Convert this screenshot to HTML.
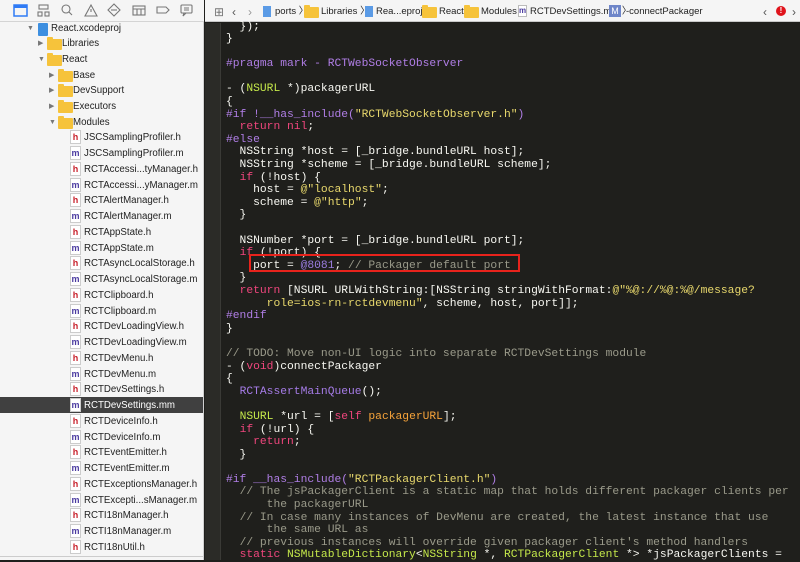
<!DOCTYPE html>
<html><head><meta charset="utf-8"><style>
*{margin:0;padding:0;box-sizing:border-box}
body{width:800px;height:560px;overflow:hidden;background:#1f1f1c;font-family:"Liberation Sans",sans-serif;position:relative}
#side{position:absolute;left:0;top:0;width:204px;height:560px;background:#f5f5f5;border-right:1px solid #d0d0d0}
#stb{position:absolute;left:0;top:0;width:204px;height:22px;border-bottom:1px solid #d4d4d4;background:#f5f5f5}
.row{position:absolute;left:0;width:203px;height:16px;font-size:9.7px;color:#222;line-height:18px;white-space:nowrap}
.row.sel{background:#404040;color:#fff}
.tri{position:absolute;font-size:7px;color:#777}
.fold{position:absolute;top:4px;width:15px;height:11px;background:#f6c33b;border-radius:1px}
.fold:before{content:"";position:absolute;left:0;top:-2px;width:6px;height:3px;background:#f6c33b;border-radius:1px 1px 0 0}
.fi{position:absolute;left:70px;top:1px;width:11px;height:14px;background:#fff;border:1px solid #ccc;font-size:9px;font-weight:bold;line-height:12px;text-align:center}
.h{color:#c8202b}.m{color:#4a3aa0}
.lbl{position:absolute}
#hdr{position:absolute;left:205px;top:0;width:595px;height:22px;background:#f5f5f5;border-bottom:1px solid #c8c8c8;font-size:9.5px;color:#222;line-height:24px;white-space:nowrap}
#gut{position:absolute;left:205px;top:23px;width:16px;height:537px;background:#2b2b27;border-right:1px solid #3a3a36}
#code{position:absolute;left:226px;top:20.5px;font-family:"Liberation Mono",monospace;font-size:11.3px;line-height:12.6px;color:#f8f8f2;white-space:pre}
.pp{color:#b07ee6}.kw{color:#f0467d}.st{color:#e8d86c}.ty{color:#c4e74a}.cm{color:#9a9a8a}.nu{color:#9b7de0}.fn{color:#a67ce8}.or{color:#f6a33a}
#box{position:absolute;left:249px;top:254px;width:271px;height:18px;border:2px solid #e8231c}
</style></head><body>
<div id="side">
<div id="stb">
<svg width="204" height="22" viewBox="0 0 204 22">
<rect x="14" y="5" width="13" height="11" fill="none" stroke="#2f7bf5" stroke-width="1.5"/><rect x="14" y="5" width="13" height="3" fill="#2f7bf5"/>
<g fill="none" stroke="#777" stroke-width="1.1">
<rect x="39" y="5" width="9" height="4"/><rect x="38" y="12" width="4" height="4"/><rect x="45" y="12" width="4" height="4"/>
<circle cx="66" cy="9" r="4"/><path d="M69 12l3 3"/>
<path d="M91 5l6 11h-12z"/><path d="M91 9v3"/>
<path d="M114 4l6 6-6 6-6-6z"/><path d="M111 10h6"/>
<rect x="133" y="6" width="12" height="9"/><path d="M133 9h12M137 9v6M141 9v6"/>
<path d="M157 7h9l3 3-3 3h-9z"/>
<rect x="181" y="5" width="11" height="8" rx="1"/><path d="M184 13l-1 3 3-3M184 8h5M184 10h5"/>
</g></svg></div>
<div class="row" style="top:20px"><span class="tri" style="left:27px">▼</span><span style="position:absolute;left:38px;top:3px;width:10px;height:13px;background:#3d8fe0;border-radius:1px"></span><span class="lbl" style="left:51px">React.xcodeproj</span></div>
<div class="row" style="top:35px"><span class="tri" style="left:38px">▶</span><span class="fold" style="left:47px"></span><span class="lbl" style="left:62px">Libraries</span></div>
<div class="row" style="top:51px"><span class="tri" style="left:38px">▼</span><span class="fold" style="left:47px"></span><span class="lbl" style="left:62px">React</span></div>
<div class="row" style="top:67px"><span class="tri" style="left:49px">▶</span><span class="fold" style="left:58px"></span><span class="lbl" style="left:73px">Base</span></div>
<div class="row" style="top:82px"><span class="tri" style="left:49px">▶</span><span class="fold" style="left:58px"></span><span class="lbl" style="left:73px">DevSupport</span></div>
<div class="row" style="top:98px"><span class="tri" style="left:49px">▶</span><span class="fold" style="left:58px"></span><span class="lbl" style="left:73px">Executors</span></div>
<div class="row" style="top:114px"><span class="tri" style="left:49px">▼</span><span class="fold" style="left:58px"></span><span class="lbl" style="left:73px">Modules</span></div>
<div class="row" style="top:129px"><span class="fi h">h</span><span class="lbl" style="left:84px">JSCSamplingProfiler.h</span></div>
<div class="row" style="top:145px"><span class="fi m">m</span><span class="lbl" style="left:84px">JSCSamplingProfiler.m</span></div>
<div class="row" style="top:161px"><span class="fi h">h</span><span class="lbl" style="left:84px">RCTAccessi...tyManager.h</span></div>
<div class="row" style="top:177px"><span class="fi m">m</span><span class="lbl" style="left:84px">RCTAccessi...yManager.m</span></div>
<div class="row" style="top:192px"><span class="fi h">h</span><span class="lbl" style="left:84px">RCTAlertManager.h</span></div>
<div class="row" style="top:208px"><span class="fi m">m</span><span class="lbl" style="left:84px">RCTAlertManager.m</span></div>
<div class="row" style="top:224px"><span class="fi h">h</span><span class="lbl" style="left:84px">RCTAppState.h</span></div>
<div class="row" style="top:240px"><span class="fi m">m</span><span class="lbl" style="left:84px">RCTAppState.m</span></div>
<div class="row" style="top:255px"><span class="fi h">h</span><span class="lbl" style="left:84px">RCTAsyncLocalStorage.h</span></div>
<div class="row" style="top:271px"><span class="fi m">m</span><span class="lbl" style="left:84px">RCTAsyncLocalStorage.m</span></div>
<div class="row" style="top:287px"><span class="fi h">h</span><span class="lbl" style="left:84px">RCTClipboard.h</span></div>
<div class="row" style="top:303px"><span class="fi m">m</span><span class="lbl" style="left:84px">RCTClipboard.m</span></div>
<div class="row" style="top:318px"><span class="fi h">h</span><span class="lbl" style="left:84px">RCTDevLoadingView.h</span></div>
<div class="row" style="top:334px"><span class="fi m">m</span><span class="lbl" style="left:84px">RCTDevLoadingView.m</span></div>
<div class="row" style="top:350px"><span class="fi h">h</span><span class="lbl" style="left:84px">RCTDevMenu.h</span></div>
<div class="row" style="top:366px"><span class="fi m">m</span><span class="lbl" style="left:84px">RCTDevMenu.m</span></div>
<div class="row" style="top:381px"><span class="fi h">h</span><span class="lbl" style="left:84px">RCTDevSettings.h</span></div>
<div class="row sel" style="top:397px"><span class="fi m">m</span><span class="lbl" style="left:84px">RCTDevSettings.mm</span></div>
<div class="row" style="top:413px"><span class="fi h">h</span><span class="lbl" style="left:84px">RCTDeviceInfo.h</span></div>
<div class="row" style="top:429px"><span class="fi m">m</span><span class="lbl" style="left:84px">RCTDeviceInfo.m</span></div>
<div class="row" style="top:444px"><span class="fi h">h</span><span class="lbl" style="left:84px">RCTEventEmitter.h</span></div>
<div class="row" style="top:460px"><span class="fi m">m</span><span class="lbl" style="left:84px">RCTEventEmitter.m</span></div>
<div class="row" style="top:476px"><span class="fi h">h</span><span class="lbl" style="left:84px">RCTExceptionsManager.h</span></div>
<div class="row" style="top:492px"><span class="fi m">m</span><span class="lbl" style="left:84px">RCTExcepti...sManager.m</span></div>
<div class="row" style="top:507px"><span class="fi h">h</span><span class="lbl" style="left:84px">RCTI18nManager.h</span></div>
<div class="row" style="top:523px"><span class="fi m">m</span><span class="lbl" style="left:84px">RCTI18nManager.m</span></div>
<div class="row" style="top:539px"><span class="fi h">h</span><span class="lbl" style="left:84px">RCTI18nUtil.h</span></div>
<div style="position:absolute;left:0;top:556px;width:203px;height:1px;background:#ccc"></div>
</div>
<div id="hdr">
<span style="position:absolute;left:9px;color:#777;font-size:12px">⊞</span>
<span style="position:absolute;left:27px;color:#555;font-size:12px">‹</span>
<span style="position:absolute;left:43px;color:#999;font-size:12px">›</span>
<span style="position:absolute;left:58px;top:6px;width:8px;height:11px;background:#5b9be6"></span><span style="position:absolute;left:70px">ports 〉</span>
<span class="fold" style="left:99px;top:7px"></span><span style="position:absolute;left:116px">Libraries 〉</span>
<span style="position:absolute;left:160px;top:6px;width:8px;height:11px;background:#5b9be6"></span><span style="position:absolute;left:171px">Rea...eproj 〉</span>
<span class="fold" style="left:217px;top:7px"></span><span style="position:absolute;left:234px">React 〉</span>
<span class="fold" style="left:259px;top:7px"></span><span style="position:absolute;left:276px">Modules 〉</span>
<span style="position:absolute;left:313px;top:5px;width:9px;height:12px;border:1px solid #bbb;background:#fff;font-size:8px;line-height:10px;text-align:center;color:#4a3aa0;font-weight:bold">m</span><span style="position:absolute;left:325px">RCTDevSettings.mm 〉</span>
<span style="position:absolute;left:404px;top:5px;width:12px;height:12px;background:#6f86c9;color:#fff;font-size:9px;line-height:12px;text-align:center">M</span><span style="position:absolute;left:421px">-connectPackager</span>
<span style="position:absolute;left:558px;font-size:12px;color:#555">‹</span>
<span style="position:absolute;left:571px;top:6px;width:10px;height:10px;border-radius:50%;background:#e0141c;color:#fff;font-size:8px;line-height:10px;text-align:center;font-weight:bold">!</span>
<span style="position:absolute;left:587px;font-size:12px;color:#555">›</span>
</div>
<div id="gut"></div>
<div id="code">  });
}

<span class="pp">#pragma mark - RCTWebSocketObserver</span>

- (<span class="ty">NSURL</span> *)packagerURL
{
<span class="pp">#if !__has_include(</span><span class="st">"RCTWebSocketObserver.h"</span><span class="pp">)</span>
  <span class="kw">return nil</span>;
<span class="pp">#else</span>
  NSString *host = [_bridge.bundleURL host];
  NSString *scheme = [_bridge.bundleURL scheme];
  <span class="kw">if</span> (!host) {
    host = <span class="st">@"localhost"</span>;
    scheme = <span class="st">@"http"</span>;
  }

  NSNumber *port = [_bridge.bundleURL port];
  <span class="kw">if</span> (!port) {
    port = <span class="nu">@8081</span>; <span class="cm">// Packager default port</span>
  }
  <span class="kw">return</span> [NSURL URLWithString:[NSString stringWithFormat:<span class="st">@"%@://%@:%@/message?</span>
<span class="st">      role=ios-rn-rctdevmenu"</span>, scheme, host, port]];
<span class="pp">#endif</span>
}

<span class="cm">// TODO: Move non-UI logic into separate RCTDevSettings module</span>
- (<span class="kw">void</span>)connectPackager
{
  <span class="fn">RCTAssertMainQueue</span>();

  <span class="ty">NSURL</span> *url = [<span class="kw">self</span> <span class="or">packagerURL</span>];
  <span class="kw">if</span> (!url) {
    <span class="kw">return</span>;
  }

<span class="pp">#if __has_include(</span><span class="st">"RCTPackagerClient.h"</span><span class="pp">)</span>
  <span class="cm">// The jsPackagerClient is a static map that holds different packager clients per</span>
<span class="cm">      the packagerURL</span>
  <span class="cm">// In case many instances of DevMenu are created, the latest instance that use</span>
<span class="cm">      the same URL as</span>
  <span class="cm">// previous instances will override given packager client's method handlers</span>
  <span class="kw">static</span> <span class="ty">NSMutableDictionary</span>&lt;<span class="ty">NSString</span> *, <span class="ty">RCTPackagerClient</span> *&gt; *jsPackagerClients =</div>
<div id="box"></div>
</body></html>
